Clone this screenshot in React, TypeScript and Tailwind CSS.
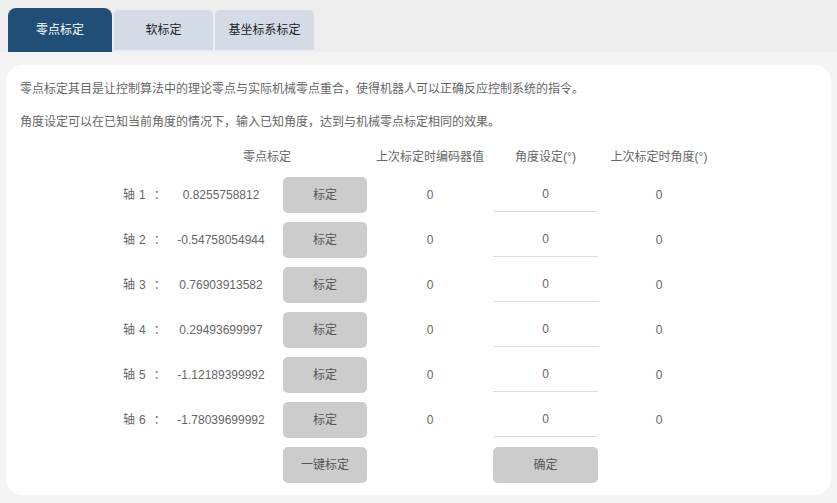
import { useState } from 'react'

const AXES = [
  { no: '1', value: '0.8255758812' },
  { no: '2', value: '-0.54758054944' },
  { no: '3', value: '0.76903913582' },
  { no: '4', value: '0.29493699997' },
  { no: '5', value: '-1.12189399992' },
  { no: '6', value: '-1.78039699992' },
]

const TABS = ['零点标定', '软标定', '基坐标系标定']

const cols = 'grid grid-cols-[52px_92px_16px_84px_126px_105px_122px] items-center'

export default function App() {
  const [active, setActive] = useState(0)
  const [angles, setAngles] = useState(['0', '0', '0', '0', '0', '0'])

  return (
    <div
      className="w-[837px] h-[503px] bg-[#f4f4f4] text-[12px] text-[#666] overflow-hidden"
      style={{ fontFamily: '"Liberation Sans", "Noto Sans CJK SC", sans-serif' }}
    >
      {/* 顶部标签 */}
      <div className="h-[52px] bg-[#eeeeee] flex items-end pl-2 gap-[2px]">
        {TABS.map((t, i) =>
          i === active ? (
            <button
              key={t}
              onClick={() => setActive(i)}
              className="w-[104px] h-[44px] bg-[#214e77] text-white rounded-t-lg"
            >
              {t}
            </button>
          ) : (
            <button
              key={t}
              onClick={() => setActive(i)}
              className="w-[99px] h-[40px] mb-[2px] bg-[#d3dce6] text-[#222] rounded-t-[5px]"
            >
              {t}
            </button>
          ),
        )}
      </div>

      {/* 内容卡片 */}
      <div className="mx-[6px] mt-[13px] h-[430px] bg-white rounded-2xl pt-[14px] pl-[14px]">
        <p className="leading-5">
          零点标定其目是让控制算法中的理论零点与实际机械零点重合，使得机器人可以正确反应控制系统的指令。
        </p>
        <p className="leading-5 mt-[13px]">角度设定可以在已知当前角度的情况下，输入已知角度，达到与机械零点标定相同的效果。</p>

        <div className="ml-[103px] mt-[15px]">
          <div className={cols + ' h-5'}>
            <div />
            <div className="col-span-3 text-center pr-[8px]">零点标定</div>
            <div className="text-center">上次标定时编码器值</div>
            <div className="text-center">角度设定(°)</div>
            <div className="text-center">上次标定时角度(°)</div>
          </div>

          <div className="mt-[10px] flex flex-col gap-[9px]">
            {AXES.map((a, i) => (
              <div key={a.no} className={cols + ' h-[36px]'}>
                <div className="flex">
                  <span>轴</span>
                  <span className="ml-[4px]">{a.no}</span>
                  <span className="ml-[8px]">：</span>
                </div>
                <div className="text-center">{a.value}</div>
                <div />
                <button className="h-[36px] rounded-[5px] bg-[#cccccc] text-[#555]">标定</button>
                <div className="text-center">0</div>
                <input
                  value={angles[i]}
                  onChange={(e) => {
                    const next = [...angles]
                    next[i] = e.target.value
                    setAngles(next)
                  }}
                  className="h-[34px] w-full border-b border-[#dddddd] text-center text-[#666] outline-none pb-[1px]"
                />
                <div className="text-center">0</div>
              </div>
            ))}

            <div className={cols + ' h-[36px]'}>
              <div />
              <div />
              <div />
              <button className="h-[36px] rounded-[5px] bg-[#cccccc] text-[#555]">一键标定</button>
              <div />
              <button className="h-[36px] rounded-[5px] bg-[#cccccc] text-[#555]">确定</button>
              <div />
            </div>
          </div>
        </div>
      </div>
    </div>
  )
}
